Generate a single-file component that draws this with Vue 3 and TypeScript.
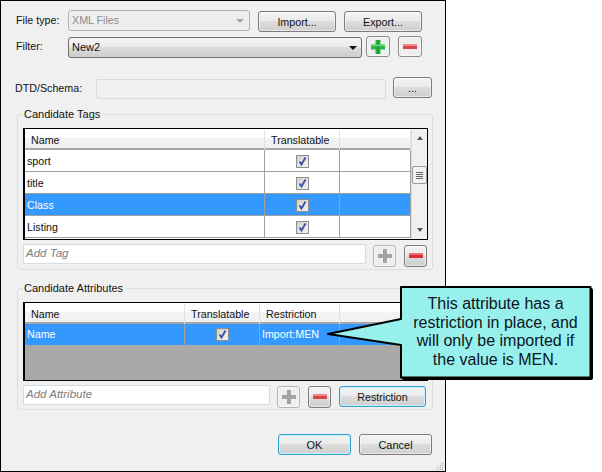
<script setup lang="ts">
const tags: { name: string; selected: boolean }[] = [
  { name: 'sport', selected: false },
  { name: 'title', selected: false },
  { name: 'Class', selected: true },
  { name: 'Listing', selected: false },
]
</script>

<template>
  <div class="page">
    <div class="dialog">
      <div class="row row-type">
        <span class="label w-file">File type:</span>
        <div class="combo disabled w-type">
          <span>XML Files</span>
          <i class="caret grey"></i>
        </div>
        <button class="btn w-io low">Import...</button>
        <button class="btn w-io low">Export...</button>
      </div>
      <div class="row row-filter">
        <span class="label w-file">Filter:</span>
        <div class="combo w-filter low">
          <span>New2</span>
          <i class="caret"></i>
        </div>
        <button class="btn icon-btn">
          <svg width="16" height="16" viewBox="0 0 16 16"><path d="M5.500 1h5v4.500H15v5h-4.500V15h-5v-4.500H1v-5h4.500z" fill="#2fb54a"/><path d="M7 1h2v14H7z" fill="#169a35"/><path d="M1 5.500h14V7H1z" fill="#63d877"/></svg>
        </button>
        <button class="btn icon-btn minus-gap">
          <svg width="16" height="8" viewBox="0 0 16 8"><rect x="1" y="1" width="14" height="5" fill="#d9454b"/><rect x="1" y="1" width="14" height="2" fill="#ee8a8e"/></svg>
        </button>
      </div>
      <div class="row row-dtd">
        <span class="label w-dtd">DTD/Schema:</span>
        <div class="input w-dtd-input"></div>
        <button class="btn w-more">...</button>
      </div>

      <fieldset class="group group-tags">
        <legend>Candidate Tags</legend>
        <div class="table tags-table">
          <div class="tags-main">
            <div class="thead tags-cols">
              <span class="cell">Name</span>
              <span class="cell">Translatable</span>
              <span class="cell"></span>
            </div>
            <div v-for="t in tags" :key="t.name" class="trow tags-cols" :class="{ sel: t.selected }">
              <span class="cell">{{ t.name }}</span>
              <span class="cell center"><i class="check"><svg width="11" height="11" viewBox="0 0 11 11"><path d="M2.500 5.500l2 3 4-7" fill="none" stroke="#3a4fa0" stroke-width="1.800"/></svg></i></span>
              <span class="cell"></span>
            </div>
          </div>
          <div class="scrollbar">
            <i class="sb-up"></i>
            <div class="thumb"><b></b><b></b><b></b><b></b></div>
            <i class="sb-down"></i>
          </div>
        </div>
        <div class="add-row">
          <div class="input add-tag placeholder">Add Tag</div>
          <button class="btn icon-sm faded">
            <svg width="16" height="16" viewBox="0 0 16 16"><path d="M6 1h4v5h5v4h-5v5H6v-5H1V6h5z" fill="#a3a3a3"/></svg>
          </button>
          <button class="btn icon-sm">
            <svg width="16" height="8" viewBox="0 0 16 8"><rect x="1" y="1" width="14" height="5" fill="#dc2e35"/><rect x="1" y="1" width="14" height="2" fill="#ef6a70"/></svg>
          </button>
        </div>
      </fieldset>

      <fieldset class="group group-attrs">
        <legend>Candidate Attributes</legend>
        <div class="table attrs-table">
          <div class="thead attrs-cols">
            <span class="cell">Name</span>
            <span class="cell">Translatable</span>
            <span class="cell">Restriction</span>
            <span class="cell"></span>
          </div>
          <div class="trow attrs-cols sel">
            <span class="cell">Name</span>
            <span class="cell center"><i class="check"><svg width="11" height="11" viewBox="0 0 11 11"><path d="M2.500 5.500l2 3 4-7" fill="none" stroke="#3a4fa0" stroke-width="1.800"/></svg></i></span>
            <span class="cell">Import:MEN</span>
            <span class="cell"></span>
          </div>
        </div>
        <div class="add-row attr-add">
          <div class="input add-attr placeholder">Add Attribute</div>
          <button class="btn icon-sm faded">
            <svg width="16" height="16" viewBox="0 0 16 16"><path d="M6 1h4v5h5v4h-5v5H6v-5H1V6h5z" fill="#a3a3a3"/></svg>
          </button>
          <button class="btn icon-sm">
            <svg width="16" height="8" viewBox="0 0 16 8"><rect x="1" y="1" width="14" height="5" fill="#d9454b"/><rect x="1" y="1" width="14" height="2" fill="#ee8a8e"/></svg>
          </button>
          <button class="btn focus w-restrict">Restriction</button>
        </div>
      </fieldset>

      <div class="actions">
        <button class="btn focus w-action">OK</button>
        <button class="btn w-action">Cancel</button>
      </div>
      <svg class="grip" width="8" height="9" viewBox="0 0 8 9" fill="#a8a8a8">
        <rect x="6" y="1" width="1" height="1"/><rect x="4" y="3" width="1" height="1"/><rect x="6" y="3" width="1" height="1"/>
        <rect x="2" y="5" width="1" height="1"/><rect x="4" y="5" width="1" height="1"/><rect x="6" y="5" width="1" height="1"/>
        <rect x="0" y="7" width="1" height="1"/><rect x="2" y="7" width="1" height="1"/><rect x="4" y="7" width="1" height="1"/><rect x="6" y="7" width="1" height="1"/>
      </svg>
    </div>

    <div class="callout">
      <svg width="272" height="100" viewBox="0 0 272 100">
        <rect x="78" y="6" width="191" height="92" rx="2" fill="#000"/>
        <path d="M77 5H266.500V95.500H77V63L4 52L77 37Z" fill="#97f0ec" stroke="#000" stroke-width="2" stroke-linejoin="round"/>
      </svg>
      <p>This attribute has a restriction in place, and will only be imported if the value is MEN.</p>
    </div>
  </div>
</template>

<style>
html, body { margin: 0; background: #fff; }
</style>

<style scoped>
.page {
  position: relative;
  width: 602px;
  height: 472px;
  overflow: hidden;
  background: #fff;
  font-family: "Liberation Sans", Arial, sans-serif;
  font-size: 10.700px;
  color: #111;
}
.dialog {
  position: relative;
  box-sizing: border-box;
  width: 446px;
  height: 472px;
  background: #f0f0f0;
  border: 1px solid #000;
  display: flex;
  flex-direction: column;
}
.row { display: flex; align-items: flex-start; flex: none; }
.row-type { margin: 9px 0 0 15px; height: 22px; }
.row-filter { margin: 4px 0 0 15px; height: 22px; }
.row-dtd { margin: 19px 0 0 14px; height: 21px; }
.label { flex: none; line-height: 21px; }
.w-file { width: 52px; }
.w-dtd { width: 81px; line-height: 23px; }
button { font: inherit; color: inherit; padding: 0; }
.combo, .btn, .input { box-sizing: border-box; flex: none; }
.combo {
  position: relative;
  height: 21px;
  border: 1px solid #6f6f6f;
  border-radius: 3px;
  padding-left: 3px;
  line-height: 19px;
  background: linear-gradient(#f4f4f4 0, #ececec 45%, #dcdcdc 50%, #cdcdcd 100%);
}
.combo.disabled {
  border-color: #b0b4b7;
  background: #eeeeee;
  color: #8a8a8a;
}
.w-type { width: 182px; }
.w-filter { width: 294px; font-size: 11px; }
.low { margin-top: 1px; }
.caret {
  position: absolute;
  right: 4px;
  top: 8px;
  width: 0;
  height: 0;
  border: 4px solid transparent;
  border-top: 4px solid #111;
  border-bottom: 0;
}
.caret.grey { border-top-color: #a5a5a5; right: 5px; }
.btn {
  height: 21px;
  border: 1px solid #7c7c7c;
  border-radius: 3px;
  background: linear-gradient(#f3f3f3 0, #ebebeb 45%, #dddddd 50%, #cfcfcf 100%);
  box-shadow: inset 0 0 0 1px rgba(255, 255, 255, 0.5);
  display: flex;
  align-items: center;
  justify-content: center;
}
.w-io { width: 78px; margin-left: 8px; }
.icon-btn { width: 24px; margin-left: 4px; background: #eeeeee; border-color: #8c8c8c; }
.minus-gap { margin-left: 8px; }
.w-more { width: 39px; margin-left: 7px; }
.w-dtd-input { width: 290px; height: 20px; margin-top: 2px; }
.input {
  border: 1px solid #d5dbe0;
  border-radius: 2px;
  background: #fff;
}
.w-dtd-input.input { background: #f0f0f0; }
.placeholder {
  color: #7d7d7d;
  font-style: italic;
  font-size: 11.500px;
  padding-left: 2px;
  line-height: 17px;
}
.group {
  box-sizing: border-box;
  flex: none;
  width: 416px;
  margin: 0 0 0 16px;
  padding: 7px 5px 0;
  border: 1px solid #d8e0e6;
  border-radius: 3px;
  min-width: 0;
}
.group legend {
  padding: 0 2px 0 1px;
  margin-left: 0;
  font-size: 11px;
  line-height: 13px;
}
.group-tags { margin-top: 10px; height: 162px; }
.group-attrs { margin-top: 12px; height: 128px; }
.table {
  box-sizing: border-box;
  border: 1px solid #000;
  border-left-width: 2px;
  width: 405px;
}
.tags-table { display: flex; height: 112px; overflow: hidden; background: #fff; }
.tags-main { width: 386px; flex: none; }
.attrs-table { height: 79px; background: #a9a9a9; }
.thead, .trow { display: grid; box-sizing: border-box; }
.tags-cols { grid-template-columns: 240px 75px 71px; }
.attrs-cols { grid-template-columns: 160px 75px 80px 70px; }
.thead {
  height: 21px;
  line-height: 20px;
  padding-top: 1px;
  background: linear-gradient(#ffffff 0, #ffffff 40%, #f1f3f5 50%, #eef0f2 100%);
  border-bottom: 2px solid #a7a7a7;
}
.thead .cell { padding-left: 6px; border-right: 1px solid #dfe3e6; }
.trow {
  height: 22px;
  line-height: 22px;
  background: #fff;
  border-bottom: 1px solid #a0a0a0;
}
.trow .cell { padding-left: 2px; border-right: 1px solid #a0a0a0; display: block; }
.trow .center { padding-left: 0; display: flex; align-items: center; justify-content: center; }
.trow.sel { background: #3399ff; color: #fff; }
.attrs-cols.trow { height: 21px; line-height: 21px; border-bottom: 0; }
.check {
  box-sizing: border-box;
  width: 13px;
  height: 13px;
  display: block;
  border: 1px solid #8d8d8d;
  background: linear-gradient(135deg, #d0d0d0, #f4f4f4);
}
.check svg { display: block; }
.scrollbar {
  position: relative;
  flex: 1;
  background: #f0f0f0;
  border-left: 1px solid #dcdcdc;
}
.sb-up, .sb-down {
  position: absolute;
  left: 5px;
  width: 0;
  height: 0;
  border: 3px solid transparent;
}
.sb-up { top: 7px; border-top: 0; border-bottom: 4px solid #555; }
.sb-down { bottom: 7px; border-bottom: 0; border-top: 4px solid #555; }
.thumb {
  position: absolute;
  left: 0;
  top: 37px;
  box-sizing: border-box;
  width: 15px;
  height: 18px;
  border: 1px solid #9b9b9b;
  border-radius: 2px;
  background: #f2f2f2;
  display: flex;
  flex-direction: column;
  align-items: center;
  justify-content: center;
  gap: 1px;
}
.thumb b { display: block; width: 7px; height: 1px; background: #666; }
.add-row { display: flex; align-items: flex-start; margin-top: 4px; }
.add-tag { width: 343px; height: 20px; }
.add-attr { width: 247px; height: 20px; }
.icon-sm { width: 23px; height: 22px; margin: 1px 0 0 7px; }
.add-row .icon-sm + .icon-sm { margin-left: 8px; }
.faded { border-color: #b3b7ba; background: #efefef; }
.focus { border-color: #2f9fd0; box-shadow: inset 0 0 0 1px #cdeefb; }
.w-restrict { width: 87px; margin: 1px 0 0 8px; }
.actions { display: flex; justify-content: flex-end; gap: 8px; margin: 24px 13px 0 0; }
.w-action { width: 73px; height: 21px; font-size: 11px; }
.grip { position: absolute; right: 1px; bottom: 0; }
.callout {
  position: absolute;
  left: 324px;
  top: 282px;
  width: 272px;
  height: 100px;
}
.callout svg { display: block; }
.callout p {
  position: absolute;
  left: 84px;
  top: 13px;
  width: 175px;
  margin: 0;
  font-size: 16px;
  line-height: 18.500px;
  text-align: center;
  color: #0c1420;
}
</style>
